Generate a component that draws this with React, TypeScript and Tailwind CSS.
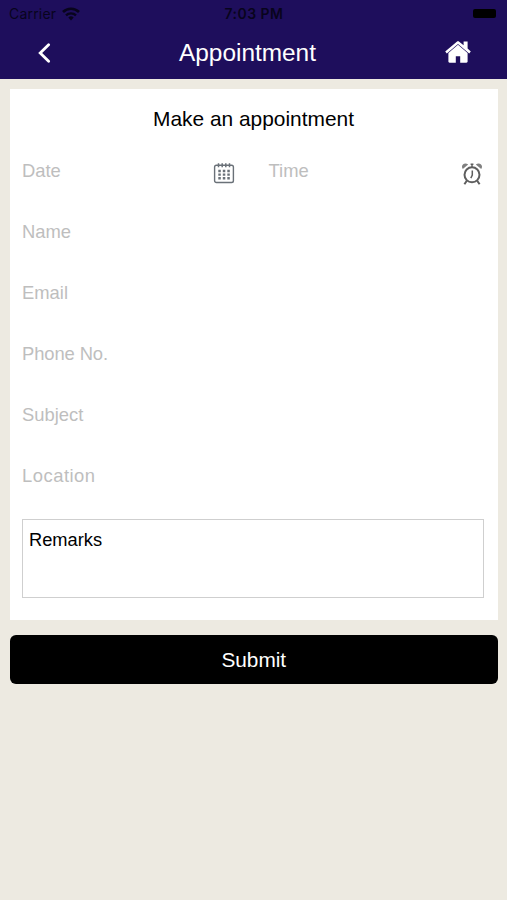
import React from 'react';

const fields = [
  { name: 'Name' },
  { name: 'Email' },
  { name: 'Phone No.', className: 'tracking-[-0.1px]' },
  { name: 'Subject' },
  { name: 'Location', className: 'tracking-[0.5px]' },
];

const StatusBar: React.FC = () => (
  <div className="grid h-[27px] grid-cols-3 items-center pr-[11px] pl-[9px] text-[#08041c]">
    <div className="flex items-center gap-[6px]">
      <span className="font-['Inter',sans-serif] text-[14px] leading-none tracking-[0.2px]">Carrier</span>
      <svg className="h-[14px] w-[18px]" viewBox="0 0 18 14" fill="none" stroke="currentColor">
        <path d="M1 4.9C5.5 .7 12.5 .7 17 4.9" strokeWidth="2.7" />
        <path d="M4 8.3C6.8 5.7 11.2 5.7 14 8.3" strokeWidth="2.4" />
        <path d="M9 13.4 6.3 10.6a3.9 3.9 0 0 1 5.4 0Z" fill="currentColor" stroke="none" />
      </svg>
    </div>
    <span className="pt-[1px] pl-[3px] text-center font-['Inter',sans-serif] text-[14px] leading-none font-semibold tracking-[0.45px] whitespace-nowrap">
      7:03 PM
    </span>
    <span className="h-[9px] w-[23px] justify-self-end rounded-[2px] bg-black" />
  </div>
);

const HomeIcon: React.FC = () => (
  <svg className="mb-[2px] h-[22px] w-[26px]" viewBox="0 0 26 22" fill="white">
    <path d="M18.6.4h4v7.2l3.2 2.8-1.6 2L13 3 1.8 12.4.2 10.4 11.8.7c.7-.6 1.7-.6 2.4 0l4.4 3.6Z" />
    <path d="M13 3.8 22.6 11.9v8.7c0 .7-.5 1.2-1.2 1.2h-6.2v-6.6h-4.4v6.6H4.6c-.7 0-1.2-.5-1.2-1.2v-8.7Z" />
  </svg>
);

const CalendarIcon: React.FC = () => (
  <svg className="mt-[5px] h-[22px] w-[22px]" viewBox="0 0 22 22" fill="none" stroke="#6a7178">
    <rect x="1.6" y="3.3" width="18.8" height="17.2" rx="1.8" strokeWidth="1.4" />
    <path d="M5.5 1.2v4M9.2 1.2v4M12.8 1.2v4M16.5 1.2v4" strokeWidth="1.5" />
    <path d="M5.3 9h11.5M5.3 12.6h11.5M5.3 16.2h11.5" strokeWidth="2.4" strokeDasharray="2.5 2" />
  </svg>
);

const ClockIcon: React.FC = () => (
  <svg className="mt-[6px] h-[24px] w-[22px]" viewBox="0 0 22 24" fill="none" stroke="#5e5e5e">
    <circle cx="11" cy="12.8" r="7.5" strokeWidth="2" />
    <path d="M11.3 8.6v4.5l-1.5 3" strokeWidth="1.5" />
    <path d="m5.8 18.7-2.4 3.6M16.2 18.7l2.4 3.6" strokeWidth="2" />
    <path d="M9.6 2.2h2.8M11 2.2v3" strokeWidth="1.4" />
    <path d="M1.8 7C-.8 3.8 3.2-.6 7.2 2.5ZM20.2 7c2.6-3.2-1.4-7.6-5.4-4.5Z" fill="#808080" stroke="none" />
  </svg>
);

const App: React.FC = () => {
  return (
    <div className="flex min-h-[900px] w-full flex-col bg-[#edeae1] font-['Liberation_Sans',Arial,sans-serif]">
      <header className="h-[79px] bg-[#1e0e5c]">
        <StatusBar />
        <div className="grid h-[51px] grid-cols-[80px_1fr_80px] items-center">
          <button type="button" aria-label="Back" className="pl-[36.5px]">
            <svg className="h-[20px] w-[14px]" viewBox="0 0 14 20" fill="none" stroke="white" strokeWidth="2.8">
              <path d="M11.6 1.7 3.2 10l8.4 8.3" strokeLinecap="round" />
            </svg>
          </button>
          <h1 className="pt-[2px] pr-[12px] text-center text-[24.4px] leading-none whitespace-nowrap text-white">
            Appointment
          </h1>
          <button type="button" aria-label="Home" className="pl-[18px]">
            <HomeIcon />
          </button>
        </div>
      </header>

      <main className="pt-[10px] pr-[9px] pl-[9.5px]">
        <section className="h-[531px] bg-white pr-[14px] pl-[12.5px]">
          <h2 className="h-[51px] pt-[18px] pl-[1px] text-center text-[20.9px] leading-[24px] text-black">
            Make an appointment
          </h2>

          <div className="flex h-[61px] text-[18.4px] leading-[61px] text-[#bebebe]">
            <div className="flex w-[246.5px] items-center justify-between pr-[33.5px]">
              <span>Date</span>
              <CalendarIcon />
            </div>
            <div className="flex flex-1 items-center justify-between pr-[1.5px]">
              <span>Time</span>
              <ClockIcon />
            </div>
          </div>

          {fields.map((field) => (
            <div key={field.name} className="h-[61px] text-[18.4px] leading-[61px] text-[#bebebe]">
              <span className={field.className}>{field.name}</span>
            </div>
          ))}

          <div className="mt-[13px] h-[79px] border border-[#cfcfcf] px-[6px] pt-[9px] text-[18.3px] leading-[22px] text-black">
            Remarks
          </div>
        </section>

        <button
          type="button"
          className="mt-[15px] h-[49px] w-full rounded-[6px] bg-black text-[20.8px] leading-[49px] text-white"
        >
          Submit
        </button>
      </main>
    </div>
  );
};

export default App;
